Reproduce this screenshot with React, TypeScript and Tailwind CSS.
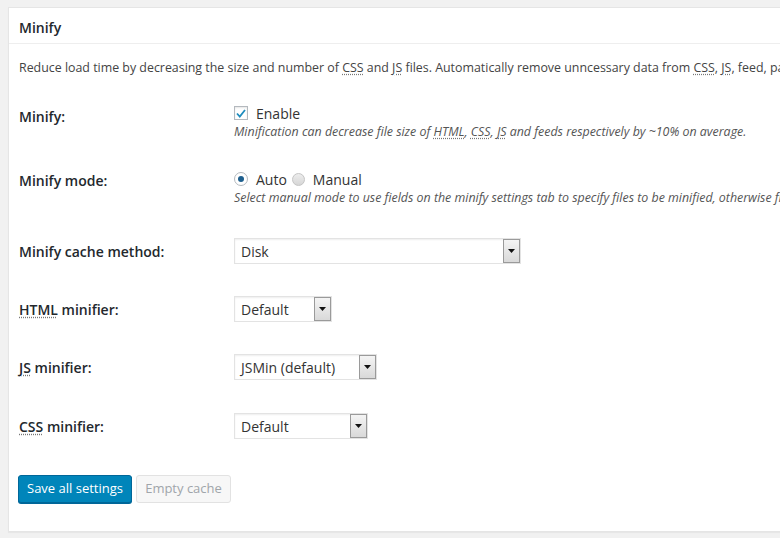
import React from 'react';

const font = { fontFamily: '"Open Sans", "Noto Sans", sans-serif' };

const Abbr = ({ children }: { children: React.ReactNode }) => (
  <span className="underline decoration-dotted decoration-[#777] underline-offset-2">{children}</span>
);

const Select = ({ value, width }: { value: string; width: string }) => (
  <div className={`flex h-[26px] items-stretch border border-[#e3e3e3] bg-white shadow-[inset_0_1px_2px_rgba(0,0,0,0.07)] ${width}`}>
    <div className="flex flex-1 items-center pl-[6px] text-[14px] text-[#333]">{value}</div>
    <div className="flex w-[17px] items-center justify-center border border-[#9a9a9a] bg-gradient-to-b from-[#f4f4f4] to-[#d9d9d9]">
      <svg width="7" height="4" viewBox="0 0 7 4">
        <path d="M0 0h7L3.5 4z" fill="#111" />
      </svg>
    </div>
  </div>
);

const Row = ({ label, top, children }: { label: React.ReactNode; top: string; children: React.ReactNode }) => (
  <div className={`grid grid-cols-[215px_1fr] ${top}`}>
    <div className="text-[14px] font-semibold text-[#23282d]">{label}</div>
    <div>{children}</div>
  </div>
);

export default function App() {
  return (
    <div className="h-[538px] w-[780px] overflow-hidden bg-[#f1f1f1] pl-2 pt-[7px]" style={font}>
      <div className="h-[525px] w-[800px] border border-[#e5e5e5] bg-white shadow-[0_1px_1px_rgba(0,0,0,0.04)]">
        {/* Header */}
        <div className="flex h-[36px] items-center border-b border-[#eeeeee] pl-[10px] pt-[3px] text-[14px] font-semibold text-[#23282d]">
          Minify
        </div>

        <div className="pl-[10px]">
          <p className="mt-[14px] whitespace-nowrap text-[12.4px] leading-[20px] text-[#444]">
            Reduce load time by decreasing the size and number of <Abbr>CSS</Abbr> and <Abbr>JS</Abbr> files. Automatically remove unncessary data from <Abbr>CSS</Abbr>, <Abbr>JS</Abbr>, feed, page and post <Abbr>HTML</Abbr>.
          </p>

          {/* Minify */}
          <Row top="mt-[25px]" label={<div className="mt-[4px] leading-[20px]">Minify:</div>}>
            <div className="flex h-[20px] items-center gap-[8px]">
              <div className="flex h-[14px] w-[14px] items-center justify-center border border-[#b4b9be] bg-white shadow-[inset_0_1px_2px_rgba(0,0,0,0.1)]">
                <svg width="10" height="9" viewBox="0 0 10 9">
                  <path d="M1 4.5l2.8 3L9 1" fill="none" stroke="#1e8cbe" strokeWidth="1.8" />
                </svg>
              </div>
              <span className="text-[14px] text-[#333]">Enable</span>
            </div>
            <div className="mt-[1px] whitespace-nowrap text-[12.4px] italic leading-[16px] text-[#555]">
              Minification can decrease file size of <Abbr>HTML</Abbr>, <Abbr>CSS</Abbr>, <Abbr>JS</Abbr> and feeds respectively by ~10% on average.
            </div>
          </Row>

          {/* Minify mode */}
          <Row top="mt-[29px]" label={<div className="mt-[2px] leading-[20px]">Minify mode:</div>}>
            <div className="flex h-[20px] items-center text-[14px] text-[#333]">
              <div className="mr-[8px] flex h-[14px] w-[14px] items-center justify-center rounded-full border border-[#b4b9be] bg-white">
                <div className="h-[6px] w-[6px] rounded-full bg-[#1e5f8e]" />
              </div>
              <span>Auto</span>
              <div className="ml-[5px] mr-[8px] h-[13px] w-[13px] rounded-full border border-[#c4c4c4] bg-gradient-to-b from-[#ededed] to-[#d6d6d6]" />
              <span>Manual</span>
            </div>
            <div className="mt-[1px] whitespace-nowrap text-[12.4px] italic leading-[16px] text-[#555]">
              Select manual mode to use fields on the minify settings tab to specify files to be minified, otherwise files will be minified automatically.
            </div>
          </Row>

          <Row top="mt-[32px] items-center" label="Minify cache method:">
            <Select value="Disk" width="w-[287px]" />
          </Row>

          <Row top="mt-[32px] items-center" label={<><Abbr>HTML</Abbr> minifier:</>}>
            <Select value="Default" width="w-[98px]" />
          </Row>

          <Row top="mt-[32px] items-center" label={<><Abbr>JS</Abbr> minifier:</>}>
            <Select value="JSMin (default)" width="w-[143px]" />
          </Row>

          <Row top="mt-[33px] items-center" label={<><Abbr>CSS</Abbr> minifier:</>}>
            <Select value="Default" width="w-[134px]" />
          </Row>

          {/* Buttons */}
          <div className="-ml-px mt-[36px] flex gap-[4px]">
            <button className="h-[28px] w-[114px] rounded-[3px] border border-[#006799] bg-[#0085ba] text-[13px] text-white shadow-[0_1px_0_#006799]">
              Save all settings
            </button>
            <button className="h-[28px] w-[95px] rounded-[3px] border border-[#e2e2e2] bg-[#f7f7f7] text-[13px] text-[#a0a5aa]">
              Empty cache
            </button>
          </div>
        </div>
      </div>
    </div>
  );
}
